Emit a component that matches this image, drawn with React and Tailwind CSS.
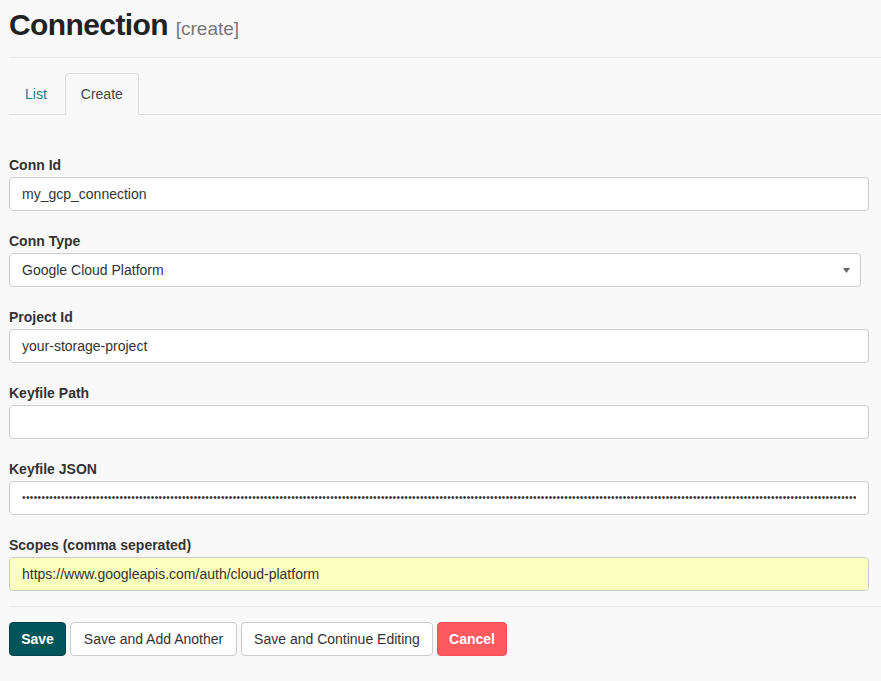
import React from 'react';

const fields = [
  { label: 'Conn Id', value: 'my_gcp_connection' },
  { label: 'Conn Type', value: 'Google Cloud Platform', select: true },
  { label: 'Project Id', value: 'your-storage-project' },
  { label: 'Keyfile Path', value: '' },
  { label: 'Keyfile JSON', password: true },
  { label: 'Scopes (comma seperated)', value: 'https://www.googleapis.com/auth/cloud-platform', autofill: true },
];

function Field({ field }) {
  let box;
  if (field.select) {
    box = (
      <div className="flex h-[34px] w-[852px] items-center justify-between rounded-[4px] border border-[#cccccc] bg-white pl-[12px] pr-[10px] text-[14px] text-[#333333]">
        <span>{field.value}</span>
        <svg width="7" height="5" viewBox="0 0 7 5">
          <path d="M0 0 H7 L3.5 5 Z" fill="#666666" />
        </svg>
      </div>
    );
  } else if (field.password) {
    box = (
      <div className="flex h-[34px] w-[860px] items-center overflow-hidden rounded-[4px] border border-[#cccccc] bg-white pl-[12px] pr-[12px]">
        <span className="overflow-hidden whitespace-nowrap text-[10px] leading-none tracking-[0.4px] text-[#333333]">
          {'\u2022'.repeat(214)}
        </span>
      </div>
    );
  } else {
    box = (
      <div
        className={`flex h-[34px] w-[860px] items-center rounded-[4px] border border-[#cccccc] pl-[12px] text-[14px] text-[#333333] ${
          field.autofill ? 'bg-[#faffbd]' : 'bg-white'
        }`}
      >
        {field.value}
      </div>
    );
  }

  return (
    <div className="mb-[20px]">
      <label className="mb-[2px] block text-[14px] font-bold leading-[20px] text-[#333333]">{field.label}</label>
      {box}
    </div>
  );
}

export default function App() {
  return (
    <div
      className="min-h-[681px] bg-[#f9f9f9] pl-[9px] text-[#333333]"
      style={{ fontFamily: '"Liberation Sans", Arial, sans-serif' }}
    >
      {/* Header */}
      <h2 className="mb-[12px] pt-2 text-[30px] font-bold leading-[33px] tracking-[-0.6px] text-[#222222]">
        Connection{' '}
        <small className="text-[19px] font-normal tracking-normal text-[#777777]">[create]</small>
      </h2>
      <div className="h-px bg-[#e6e6e6]" />

      {/* Tabs */}
      <div className="mt-[15px] flex border-b border-[#dddddd]">
        <a className="mr-[2px] block border border-transparent px-[15px] pb-[9px] pt-[10px] text-[14px] leading-[20px] text-[#1a7a8c]">
          List
        </a>
        <a className="-mb-px block rounded-t-[4px] border border-[#dddddd] border-b-transparent bg-[#f9f9f9] px-[15px] pb-[9px] pt-[10px] text-[14px] leading-[20px] text-[#444444]">
          Create
        </a>
      </div>

      {/* Form */}
      <div className="mt-[40px]">
        {fields.map((f) => (
          <Field key={f.label} field={f} />
        ))}
      </div>

      <div className="-mt-[5px] h-px bg-[#e6e6e6]" />

      {/* Actions */}
      <div className="mt-[15px] flex gap-[4px] text-[14px]">
        <button className="h-[34px] w-[57px] rounded-[4px] border border-[#00434a] bg-[#00555b] font-bold text-white">
          Save
        </button>
        <button className="h-[34px] w-[167px] rounded-[4px] border border-[#cccccc] bg-white text-[#333333]">
          Save and Add Another
        </button>
        <button className="h-[34px] w-[192px] rounded-[4px] border border-[#cccccc] bg-white text-[#333333]">
          Save and Continue Editing
        </button>
        <button className="h-[34px] w-[70px] rounded-[4px] border border-[#ff4a50] bg-[#ff5a5f] font-bold text-white">
          Cancel
        </button>
      </div>
    </div>
  );
}
